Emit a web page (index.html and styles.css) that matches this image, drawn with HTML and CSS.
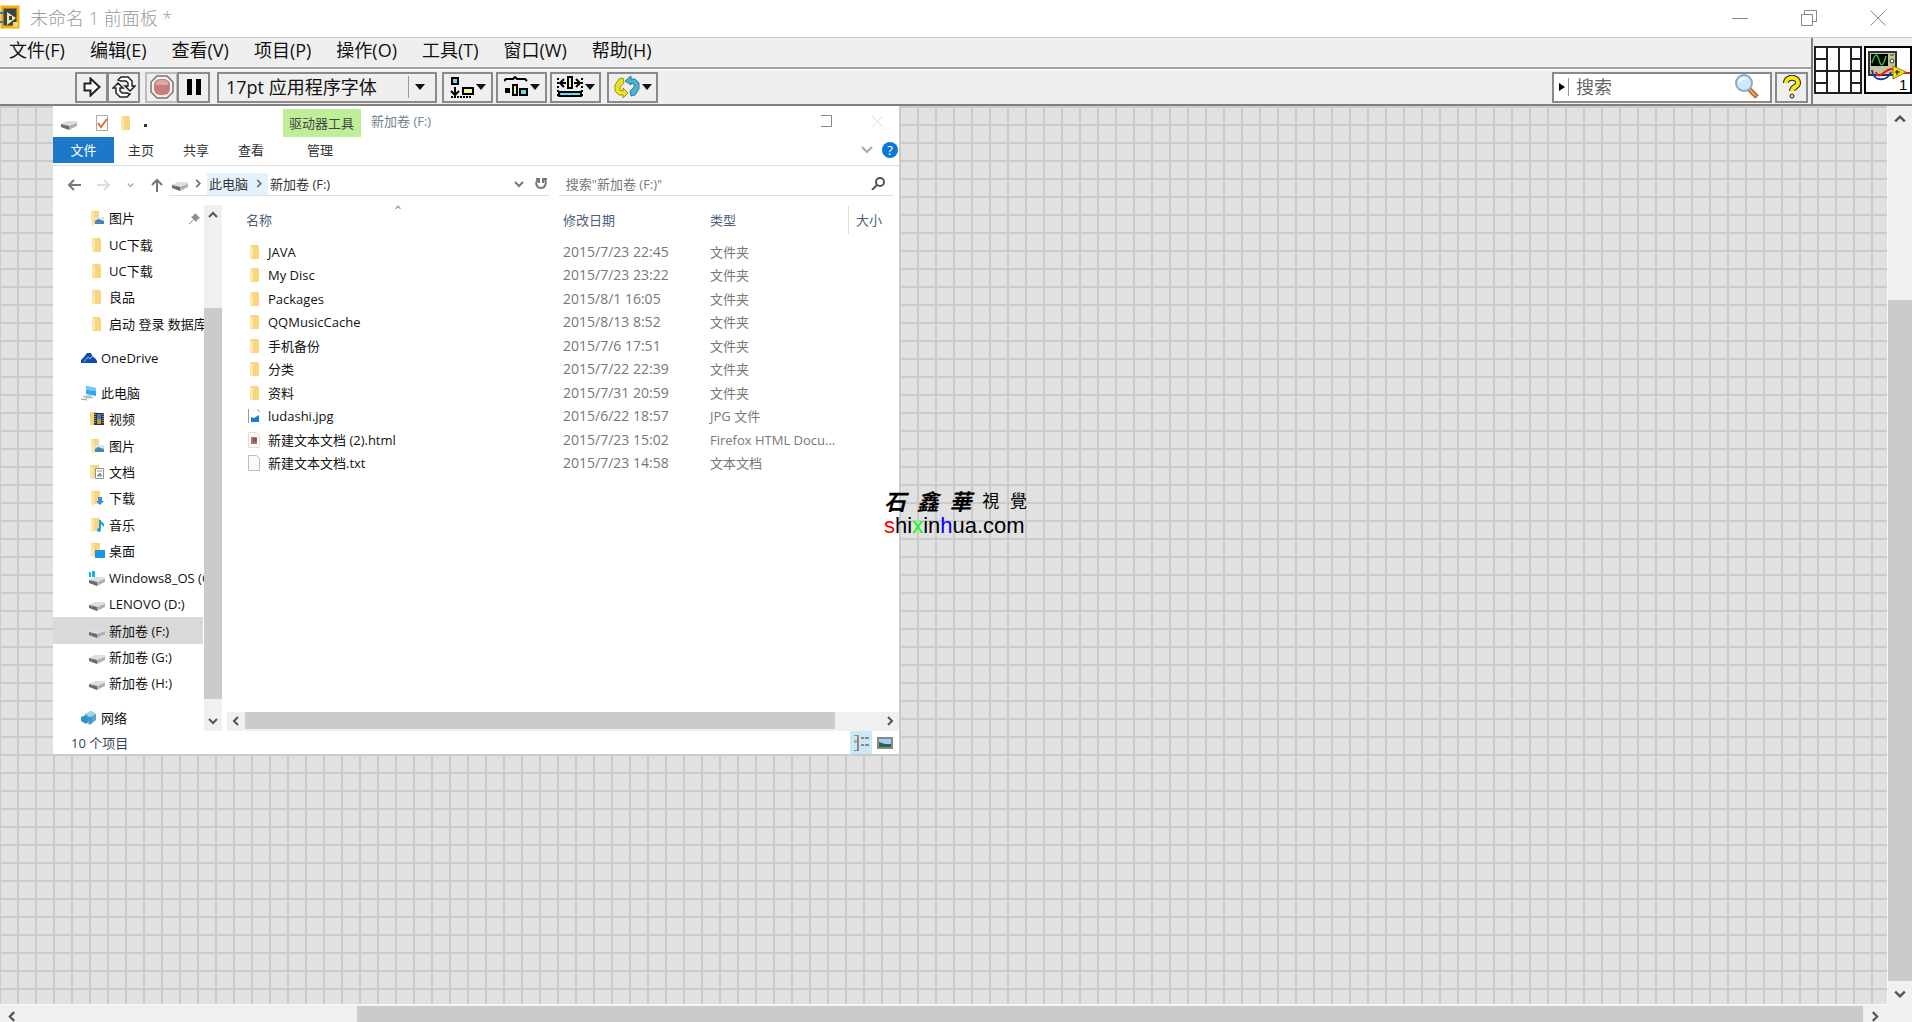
FILE: index.html
```html
<!DOCTYPE html>
<html lang="zh-CN">
<head>
<meta charset="utf-8">
<title>未命名 1 前面板</title>
<link rel="stylesheet" href="styles.css">
</head>
<body>
<svg class="defs" aria-hidden="true">
  <symbol id="folder" viewBox="0 0 16 16"><path d="M3 1h8l1 2v12H3z" fill="#f7d67e"/><path d="M3 1l3 2v13l-3-2z" fill="#fbe6ab"/></symbol>
  <symbol id="pictures" viewBox="0 0 16 16"><path d="M2 1h8v13H2z" fill="#f7d67e"/><path d="M2 1l3 2v13l-3-2z" fill="#fbe6ab"/><path d="M6 7h9v7H6z" fill="#cfe6f7"/><path d="M6 11l3-2 6 2v3H6z" fill="#4c86ae"/></symbol>
  <symbol id="video" viewBox="0 0 16 16"><path d="M1 1h8v13H1z" fill="#f7d67e"/><path d="M5 2h10v12H5z" fill="#333"/><path d="M8 3h4v5H8z" fill="#3d7bd0"/><path d="M8 8h4v5H8z" fill="#b99a3c"/><path d="M6 3v10M14 3v10" stroke="#ddd" stroke-dasharray="1 1"/></symbol>
  <symbol id="docs" viewBox="0 0 16 16"><path d="M1 1h9v13H1z" fill="#f7d67e"/><path d="M1 1l3 2v13l-3-2z" fill="#fbe6ab"/><path d="M6.500 4.500h8v10h-8z" fill="#fff" stroke="#8b969c"/><path d="M8 12l3-3 2 3zM8 7h5" fill="#8b969c" stroke="#8b969c"/></symbol>
  <symbol id="downloads" viewBox="0 0 16 16"><path d="M2 1h9v13H2z" fill="#f7d67e"/><path d="M2 1l3 2v13l-3-2z" fill="#fbe6ab"/><path d="M9 7h4v4h2l-4 4-4-4h2z" fill="#3c8ed8"/></symbol>
  <symbol id="music" viewBox="0 0 16 16"><path d="M2 1h9v13H2z" fill="#f7d67e"/><path d="M2 1l3 2v13l-3-2z" fill="#fbe6ab"/><path d="M11 3v9" stroke="#159be8" stroke-width="2"/><circle cx="10" cy="13" r="2" fill="#159be8"/><path d="M11 3l4 4v3l-4-4z" fill="#159be8"/></symbol>
  <symbol id="desktop" viewBox="0 0 16 16"><path d="M2 0h9v13H2z" fill="#f7d67e"/><path d="M2 0l3 2v13l-3-2z" fill="#fbe6ab"/><path d="M6 7h10v8H6z" fill="#1797e5"/></symbol>
  <symbol id="drive" viewBox="0 0 16 16"><path d="M0 9l6-3h10v3l-8 3z" fill="#dedede"/><path d="M0 9l8 2v4l-8-3z" fill="#6a6a6a"/><path d="M8 11l8-3v3l-8 4z" fill="#b0b0b0"/><path d="M2 11h2" stroke="#41bd4e"/></symbol>
  <symbol id="osdrive" viewBox="0 0 16 16"><path d="M0 10l6-3h10v3l-8 3z" fill="#dedede"/><path d="M0 10l8 2v4l-8-3z" fill="#6a6a6a"/><path d="M8 12l8-3v3l-8 4z" fill="#b0b0b0"/><path d="M0 2h2v5H0zM3 1h3v6H3z" fill="#12b2ee"/></symbol>
  <symbol id="cloud" viewBox="0 0 16 12"><path d="M0 11V8l3-3 3-4 4 0 2 4 2 1 2 3v2z" fill="#0c4eaa"/><path d="M3 10l4-5 2 2 2-3" stroke="#9dbbe6" fill="none"/></symbol>
  <symbol id="pc" viewBox="0 0 16 16"><path d="M5 1l10 2v8L5 9z" fill="#32a9ec"/><path d="M5 1l10 2v3L5 5z" fill="#71caf8"/><path d="M1 11l8-1 4 3-8 1z" fill="#b9c2c9"/><path d="M0 14l6 1" stroke="#8c989f"/></symbol>
  <symbol id="network" viewBox="0 0 16 16"><path d="M4 4l6-3 5 3v6l-6 5-5-4z" fill="#5aa5d2"/><path d="M4 4l6-3 5 3-6 3z" fill="#a5d5ee"/><path d="M0 7l5-2 4 4-4 5-5-3z" fill="#3193ca"/><path d="M10 7v6" stroke="#347aaa"/></symbol>
  <symbol id="chev-r" viewBox="0 0 8 10"><path d="M2 1l4 4-4 4" fill="none" stroke="currentColor" stroke-width="2"/></symbol>
  <symbol id="chev-l" viewBox="0 0 8 10"><path d="M6 1L2 5l4 4" fill="none" stroke="currentColor" stroke-width="2"/></symbol>
  <symbol id="chev-d" viewBox="0 0 10 8"><path d="M1 2l4 4 4-4" fill="none" stroke="currentColor" stroke-width="2"/></symbol>
  <symbol id="chev-u" viewBox="0 0 10 8"><path d="M1 6l4-4 4 4" fill="none" stroke="currentColor" stroke-width="2"/></symbol>
  <symbol id="tri" viewBox="0 0 10 6"><path d="M0 0h10L5 6z" fill="#111"/></symbol>
</svg>

<header class="titlebar">
  <svg class="logo" viewBox="0 0 24 28"><path d="M2 3h16v20H2z" fill="#3b4248" stroke="#f0b010" stroke-width="3"/><path d="M7 8l9 6-9 7z" fill="#f3e7a0"/><path d="M9 12h3v4H9z" fill="#3b4248"/><path d="M0 9h4M0 18h4" stroke="#2680b5" stroke-width="2"/><path d="M13 18h5v5h-5z" fill="#f6d66a"/></svg>
  <h1>未命名 1 前面板 *</h1>
  <button aria-label="最小化"><svg width="16" height="16"><path d="M0 8.500h16" stroke="#888"/></svg></button>
  <button aria-label="还原"><svg width="16" height="16" fill="none" stroke="#888"><path d="M.5 4.500h11v11H.5zM3.500 4V.5h12v11H12"/></svg></button>
  <button aria-label="关闭"><svg width="16" height="16" stroke="#888"><path d="M.5.5l15 15M15.500.5l-15 15"/></svg></button>
</header>

<div class="chrome">
  <div class="bars">
    <nav class="menu">
      <button>文件(F)</button><button>编辑(E)</button><button>查看(V)</button><button>项目(P)</button><button>操作(O)</button><button>工具(T)</button><button>窗口(W)</button><button>帮助(H)</button>
    </nav>
    <div class="toolbar">
      <div class="group">
        <button class="tool" aria-label="运行"><svg width="18" height="20"><path d="M1.500 6.500h6V1.500l9 8.500-9 8.500v-5h-6z" fill="#fff" stroke="#222" stroke-width="2"/></svg></button>
        <button class="tool" aria-label="连续运行"><svg width="24" height="22" fill="#fff" stroke="#222" stroke-width="1.500"><path d="M6 4l3-3h7l4 4v5h3l-5 5-5-5h3V7l-2-2h-5z"/><path d="M18 18l-3 3H8l-4-4v-5H1l5-5 5 5H8v3l2 2h5z"/></svg></button>
      </div>
      <div class="group">
        <button class="tool off" aria-label="中止"><svg width="24" height="24"><path d="M7 1h10l6 6v10l-6 6H7l-6-6V7z" fill="#f4eeee" stroke="#777" stroke-width="1.500"/><rect x="4" y="4" width="16" height="16" rx="6" fill="#c77c7e"/><path d="M6 7c3-3 9-3 12 0v3H6z" fill="#dda6a6"/></svg></button>
        <button class="tool" aria-label="暂停"><svg width="14" height="16"><path d="M0 0h5v16H0zM9 0h5v16H9z" fill="#000"/></svg></button>
      </div>
      <button class="font-box"><span>17pt 应用程序字体</span><i></i><svg class="tri"><use href="#tri"/></svg></button>
      <div class="group spaced">
        <button class="tool wide" aria-label="对齐对象"><svg width="24" height="22"><path d="M2 2h6v6H2z" fill="#6fd8f2" stroke="#000" stroke-width="2"/><path d="M13 12h10v6H13z" fill="#f7f29a" stroke="#000" stroke-width="2"/><path d="M5 11v8M1 15l4 4 4-4" stroke="#000" stroke-width="2" fill="none"/><path d="M1 21h20" stroke="#000" stroke-width="2" stroke-dasharray="2 1"/></svg><svg class="tri"><use href="#tri"/></svg></button>
        <button class="tool wide" aria-label="分布对象"><svg width="24" height="22"><path d="M0 5l2-2h7l2-2 2 2h8l2 2" fill="none" stroke="#000" stroke-width="2"/><path d="M1 12h5v5H1z"/><path d="M9 9h4v10H9z" fill="#f7f29a" stroke="#000" stroke-width="2"/><path d="M16 13h7v6h-7z" fill="#6fd8f2" stroke="#000" stroke-width="2"/></svg><svg class="tri"><use href="#tri"/></svg></button>
        <button class="tool wide" aria-label="调整对象大小"><svg width="26" height="22"><path d="M1 2v18M25 2v18" stroke="#000" stroke-dasharray="2 2" stroke-width="2"/><path d="M3 7h6M17 7h6M7 3L3 7l4 4M19 3l4 4-4 4" stroke="#000" stroke-width="2" fill="none"/><path d="M11 1h4v11h-4z" fill="#f7f29a" stroke="#000" stroke-width="2"/><path d="M2 16h22v4H2z" fill="#6fd8f2" stroke="#000" stroke-width="2"/></svg><svg class="tri"><use href="#tri"/></svg></button>
        <button class="tool wide order" aria-label="重新排序"><svg width="26" height="24"><path d="M9 3L5 4 1 10v6l4 4h4v3l5-5-5-5v3l-3-1v-3l4-4z" fill="#eee01b" stroke="#9a9413"/><path d="M17 21l4-1 4-6V8l-4-4h-4V1l-6 5 6 4V8l3 1v3l-4 4z" fill="#4bb3ce" stroke="#2b7f98"/></svg><svg class="tri"><use href="#tri"/></svg></button>
      </div>
      <div class="search">
        <svg width="6" height="8"><path d="M0 0l6 4-6 4z"/></svg><i></i>
        <input type="text" placeholder="搜索" aria-label="搜索">
        <svg width="26" height="26"><path d="M15 15l8 8" stroke="#b36a33" stroke-width="5"/><path d="M14 14l8 8" stroke="#eaa565" stroke-width="2"/><circle cx="10" cy="9" r="8" fill="#cdeafc" stroke="#8aa9c9" stroke-width="2"/><path d="M5 8c1-3 4-4 7-3" stroke="#fff" stroke-width="2" fill="none"/></svg>
      </div>
      <button class="tool" aria-label="帮助"><svg width="18" height="24"><path d="M3 8c0-7 12-7 12 0 0 4-6 4-6 8" fill="none" stroke="#222" stroke-width="6"/><path d="M3 8c0-7 12-7 12 0 0 4-6 4-6 8" fill="none" stroke="#f5ec12" stroke-width="4"/><circle cx="9" cy="21" r="2" fill="#f5ec12" stroke="#222"/></svg></button>
    </div>
  </div>
  <div class="vi">
    <svg width="48" height="48" fill="#fff" stroke="#222" stroke-width="2"><path d="M1 1h46v46H1z"/><path d="M13 1v46M25 1v46M37 1v46M1 13h12M1 25h46M1 37h12M37 13h10M37 37h10"/></svg>
    <svg width="48" height="48"><path d="M1 1h46v46H1z" fill="#fff" stroke="#000" stroke-width="2"/><path d="M5 6h27v23H5z" fill="#c9c4a0" stroke="#333" stroke-width="2"/><path d="M7 8h17v12H7z"/><path d="M8 17c3-10 5-10 7-3s4 7 7-4" fill="none" stroke="#28c440" stroke-width="1.500"/><circle cx="28" cy="15" r="2" fill="#fff" stroke="#333"/><path d="M26 9h4" stroke="#333"/><path d="M8 24c1 12 15 12 19 2" stroke="#223a9c" stroke-width="2" fill="none"/><path d="M12 26c3 10 8-4 17-3M40 27h6" stroke="#e81c1c" stroke-width="2" fill="none"/><path d="M29 20l13 6-13 7z" fill="#f3e51b" stroke="#8b7c00"/><path d="M31 26h5M33 24v5" stroke="#000"/><text x="35" y="44" class="vi-num">1</text></svg>
  </div>
</div>

<main class="workspace">
  <section class="panel">
    <article class="explorer">
      <div class="ex-title">
        <svg class="ic"><use href="#drive"/></svg>
        <svg width="12" height="18" class="check"><path d="M.5 1.500h11v15H.5z" fill="#fff" stroke="#aaa"/><path d="M2 9l3 4 6-8" stroke="#e8693c" stroke-width="2" fill="none"/></svg>
        <svg class="ic"><use href="#folder"/></svg>
        <b></b>
        <span class="tools">驱动器工具</span>
        <h2>新加卷 (F:)</h2>
        <button aria-label="最大化"><svg width="11" height="13"><path d="M0 .5h10.500v11H0" fill="none" stroke="#888"/></svg></button>
        <button aria-label="关闭窗口"><svg width="11" height="11"><path d="M0 0l11 11M11 0L0 11" stroke="#ddd"/></svg></button>
      </div>
      <div class="tabs">
        <button class="file">文件</button><button>主页</button><button>共享</button><button>查看</button><button class="manage">管理</button>
        <svg width="12" height="8" class="fold"><path d="M1 1l5 5 5-5" stroke="#aaa" fill="none" stroke-width="2"/></svg>
        <button class="help">?</button>
      </div>
      <div class="address">
        <div class="arrows">
          <svg width="14" height="12" fill="none" stroke="#777" stroke-width="2"><path d="M14 6H2M7 1L2 6l5 5"/></svg>
          <svg width="14" height="12" fill="none" stroke="#ddd" stroke-width="2"><path d="M0 6h12M7 1l5 5-5 5"/></svg>
          <svg class="small"><use href="#chev-d"/></svg>
          <svg width="14" height="14" fill="none" stroke="#777" stroke-width="2"><path d="M7 14V2M2 7l5-5 5 5"/></svg>
        </div>
        <div class="path">
          <svg class="ic"><use href="#drive"/></svg>
          <svg class="chev"><use href="#chev-r"/></svg>
          <a href="#pc" class="crumb">此电脑<svg class="chev"><use href="#chev-r"/></svg></a>
          <a href="#f">新加卷 (F:)</a>
          <svg class="drop"><use href="#chev-d"/></svg>
          <svg width="12" height="13"><path d="M1 2h3v4M3 3C0 5 1 11 6 11s6-7 3-9M8 6V2h4" stroke="#777" stroke-width="2" fill="none"/></svg>
        </div>
        <div class="find">
          <input type="text" placeholder="搜索&quot;新加卷 (F:)&quot;" aria-label="搜索新加卷">
          <svg width="14" height="13"><circle cx="9" cy="5" r="4" fill="none" stroke="#555" stroke-width="2"/><path d="M6 8l-5 5" stroke="#555" stroke-width="2"/></svg>
        </div>
      </div>
      <div class="ex-body">
        <nav class="tree">
          <a href="#t" class="sub"><svg class="ic"><use href="#pictures"/></svg><span>图片</span><svg width="12" height="12" class="pin"><path d="M6 1l5 5-2 1-2 3-5-5 3-2z" fill="#888f96"/><path d="M4 8l-4 4" stroke="#888f96"/></svg></a>
          <a href="#t" class="sub"><svg class="ic"><use href="#folder"/></svg><span>UC下载</span></a>
          <a href="#t" class="sub"><svg class="ic"><use href="#folder"/></svg><span>UC下载</span></a>
          <a href="#t" class="sub"><svg class="ic"><use href="#folder"/></svg><span>良品</span></a>
          <a href="#t" class="sub"><svg class="ic"><use href="#folder"/></svg><span>启动 登录 数据库</span></a>
          <a href="#t" class="root"><svg class="ic"><use href="#cloud"/></svg><span>OneDrive</span></a>
          <a href="#t" class="root"><svg class="ic"><use href="#pc"/></svg><span>此电脑</span></a>
          <a href="#t" class="sub"><svg class="ic"><use href="#video"/></svg><span>视频</span></a>
          <a href="#t" class="sub"><svg class="ic"><use href="#pictures"/></svg><span>图片</span></a>
          <a href="#t" class="sub"><svg class="ic"><use href="#docs"/></svg><span>文档</span></a>
          <a href="#t" class="sub"><svg class="ic"><use href="#downloads"/></svg><span>下载</span></a>
          <a href="#t" class="sub"><svg class="ic"><use href="#music"/></svg><span>音乐</span></a>
          <a href="#t" class="sub"><svg class="ic"><use href="#desktop"/></svg><span>桌面</span></a>
          <a href="#t" class="sub"><svg class="ic"><use href="#osdrive"/></svg><span>Windows8_OS (C:)</span></a>
          <a href="#t" class="sub"><svg class="ic"><use href="#drive"/></svg><span>LENOVO (D:)</span></a>
          <a href="#t" class="sub current"><svg class="ic"><use href="#drive"/></svg><span>新加卷 (F:)</span></a>
          <a href="#t" class="sub"><svg class="ic"><use href="#drive"/></svg><span>新加卷 (G:)</span></a>
          <a href="#t" class="sub"><svg class="ic"><use href="#drive"/></svg><span>新加卷 (H:)</span></a>
          <a href="#t" class="root"><svg class="ic"><use href="#network"/></svg><span>网络</span></a>
        </nav>
        <div class="vbar slim"><svg><use href="#chev-u"/></svg><span class="before"></span><span class="thumb"></span><svg><use href="#chev-d"/></svg></div>
        <div class="files">
          <svg class="sort"><use href="#chev-u"/></svg>
          <table>
            <colgroup><col class="c-name"><col class="c-date"><col class="c-type"><col></colgroup>
            <thead><tr><th>名称</th><th>修改日期</th><th>类型</th><th><span>大小</span></th></tr></thead>
            <tbody>
              <tr><td><svg class="ic"><use href="#folder"/></svg>JAVA</td><td>2015/7/23 22:45</td><td>文件夹</td><td></td></tr>
              <tr><td><svg class="ic"><use href="#folder"/></svg>My Disc</td><td>2015/7/23 23:22</td><td>文件夹</td><td></td></tr>
              <tr><td><svg class="ic"><use href="#folder"/></svg>Packages</td><td>2015/8/1 16:05</td><td>文件夹</td><td></td></tr>
              <tr><td><svg class="ic"><use href="#folder"/></svg>QQMusicCache</td><td>2015/8/13 8:52</td><td>文件夹</td><td></td></tr>
              <tr><td><svg class="ic"><use href="#folder"/></svg>手机备份</td><td>2015/7/6 17:51</td><td>文件夹</td><td></td></tr>
              <tr><td><svg class="ic"><use href="#folder"/></svg>分类</td><td>2015/7/22 22:39</td><td>文件夹</td><td></td></tr>
              <tr><td><svg class="ic"><use href="#folder"/></svg>资料</td><td>2015/7/31 20:59</td><td>文件夹</td><td></td></tr>
              <tr><td><svg class="ic" viewBox="0 0 16 16"><path d="M1.500 1v14M10 1l3 3" stroke="#999"/><path d="M4 14V9l3 1 5-3v7z" fill="#1680d8"/></svg>ludashi.jpg</td><td>2015/6/22 18:57</td><td>JPG 文件</td><td></td></tr>
              <tr><td><svg class="ic" viewBox="0 0 16 16"><path d="M1.500.5h8l3 3v12h-11z" fill="#fafafa" stroke="#ddd"/><path d="M4 5h6v7H4z" fill="#e0642a"/><circle cx="8" cy="8" r="2" fill="#2b6cc4"/></svg>新建文本文档 (2).html</td><td>2015/7/23 15:02</td><td>Firefox HTML Docu...</td><td></td></tr>
              <tr><td><svg class="ic" viewBox="0 0 16 16"><path d="M1.500.5h8l3 3v12h-11z" fill="#fafafa" stroke="#bbb"/></svg>新建文本文档.txt</td><td>2015/7/23 14:58</td><td>文本文档</td><td></td></tr>
            </tbody>
          </table>
          <div class="hbar slim"><svg><use href="#chev-l"/></svg><span class="thumb"></span><span class="after"></span><svg><use href="#chev-r"/></svg></div>
        </div>
      </div>
      <div class="status">
        <span>10 个项目</span>
        <button class="on" aria-label="详细信息"><svg width="16" height="16"><path d="M1 0h4v16H1M8 3h3M12 3h4M8 10h3M12 10h4" fill="none" stroke="#8a8a8a" stroke-width="2"/><path d="M1 5h3v3H1z" fill="#d6a45c"/></svg></button>
        <button aria-label="大图标"><svg width="16" height="12"><path d="M1 1h14v10H1z" fill="#9cd0f4" stroke="#888" stroke-width="2"/><path d="M2 5l6 2h6v3H2z" fill="#2e6350"/></svg></button>
      </div>
    </article>
    <div class="mark">
      <div class="brush"><b>石</b><b>鑫</b><b>華</b><span>視</span><span>覺</span></div>
      <div class="site"><span class="r">s</span>hi<span class="g">x</span>in<span class="b">h</span>ua.com</div>
    </div>
  </section>
  <div class="vbar main-v"><svg><use href="#chev-u"/></svg><span class="before"></span><span class="thumb"></span><svg><use href="#chev-d"/></svg></div>
  <div class="hbar main-h"><svg><use href="#chev-l"/></svg><span class="before"></span><span class="thumb"></span><svg><use href="#chev-r"/></svg></div>
</main>
</body>
</html>
```
FILE: styles.css
```css
* { box-sizing: border-box; }
body {
  margin: 0;
  height: 100vh;
  display: flex;
  flex-direction: column;
  overflow: hidden;
  background: #efefef;
  color: #111;
  font: 18px/24px "Open Sans", "Noto Sans CJK SC", sans-serif;
}
button { margin: 0; padding: 0; border: 0; background: none; color: inherit; font: inherit; }
a { color: inherit; text-decoration: none; }
h1, h2 { margin: 0; font: inherit; }
input { border: 0; padding: 0; background: none; font: inherit; min-width: 0; outline: 0; }
svg { display: block; flex: none; }
.defs { position: absolute; width: 0; height: 0; }

/* title bar */
.titlebar { display: flex; align-items: center; height: 38px; flex: none; padding-bottom: 2px; background: #fff; border-bottom: 1px solid #ccc; }
.logo { width: 24px; height: 28px; margin-right: 6px; }
.titlebar h1 { flex: 1; color: #999; font-weight: 300; }
.titlebar button { width: 69px; height: 35px; display: grid; place-items: center; }

/* menu and toolbar */
.chrome { display: flex; flex: none; height: 68px; border-bottom: 2px solid #808080; }
.bars { flex: 1; min-width: 0; }
.menu { display: flex; gap: 25px; height: 31px; padding-left: 9px; border-bottom: 2px solid #a0a0a0; }
.menu button { height: 24px; white-space: nowrap; }
.toolbar { display: flex; align-items: center; height: 35px; padding: 0 3px 0 75px; border-top: 1px solid #fff; }
.group { display: flex; margin-right: 5px; }
.tool { display: flex; align-items: center; justify-content: center; width: 33px; height: 31px; border: 2px solid #8a8a8a; background: #efefef; }
.group .tool + .tool { margin-left: -1px; }
.tool.off { border-color: #bcbcbc; }
.tri { width: 10px; height: 6px; }
.font-box { display: flex; align-items: center; width: 220px; height: 31px; margin: 0 5px 0 2px; padding: 0 10px 0 7px; border: 2px solid #8a8a8a; white-space: nowrap; }
.font-box span { flex: 1; text-align: left; }
.font-box i { width: 1px; height: 22px; margin-right: 6px; background: #999; }
.spaced { gap: 3px; }
.group .wide, .group .wide + .wide { width: 51px; gap: 2px; margin-left: 0; }
.group .wide + .order { margin-left: 3px; }
.search { display: flex; align-items: center; width: 220px; height: 31px; margin: 0 3px 0 auto; padding: 0 10px 0 5px; border: 2px solid #8a8a8a; background: #fff; }
.search i { width: 1px; height: 18px; margin: 0 7px 0 3px; background: #999; }
.search input { flex: 1; }
.search input::placeholder { color: #666; opacity: 1; }
.vi { display: flex; gap: 2px; padding: 8px 0 0 1px; border-left: 2px solid #808080; }
.vi-num { font: 15px "Liberation Sans", sans-serif; }

/* workspace */
.workspace { flex: 1; min-height: 0; display: grid; grid-template: minmax(0, 1fr) 17px / minmax(0, 1fr) 24px; }
.panel {
  position: relative;
  overflow: hidden;
  border: solid #f8f8f8;
  border-width: 0 1px 1px 0;
  background-color: #e1e1e1;
  background-image: linear-gradient(#cbcbcb 2px, transparent 2px), linear-gradient(90deg, #cbcbcb 2px, transparent 2px);
  background-size: 18px 18px;
  background-position: 0 0, 17px 0;
}
.vbar, .hbar { display: flex; align-items: center; background: #f0f0f0; color: #555; overflow: hidden; }
.vbar { flex-direction: column; }
.thumb { background: #cbcbcb; }
.vbar .thumb { width: 100%; }
.hbar .thumb { height: 100%; }
.vbar svg { width: 12px; height: 10px; margin: 8px 0 6px; }
.hbar svg { width: 10px; height: 12px; margin: 0 7px; }
.main-v .before { flex: 170; }
.main-v .thumb { flex: 679; }
.main-h { grid-column: 1 / -1; padding-right: 25px; align-items: flex-end; }
.main-h .before { flex: 333; }
.main-h .thumb { flex: 1505; height: 16px; }
.main-h svg { height: 11px; }

/* file explorer window */
.explorer {
  position: absolute;
  left: 53px;
  top: 0;
  width: 846px;
  height: 648px;
  display: flex;
  flex-direction: column;
  background: #fff;
  font-size: 13px;
  line-height: 20px;
}
.ic { width: 16px; height: 16px; }
.ex-title { display: flex; align-items: center; height: 31px; flex: none; padding: 3px 0 0 8px; }
.check { margin: 0 10px 0 19px; }
.ex-title b { width: 3px; height: 3px; margin: 4px 136px 0 10px; background: #333; }
.tools { align-self: stretch; padding: 4px 6px; width: 78px; background: #bfee98; color: #444; white-space: nowrap; }
.ex-title h2 { flex: 1; margin: 0 0 4px 10px; color: #75808f; }
.ex-title button { width: 51px; height: 24px; margin-bottom: 4px; display: grid; place-items: center; }
.ex-title button:last-child { margin-right: -4px; }
.tabs { display: flex; align-items: center; height: 29px; flex: none; padding-bottom: 2px; border-bottom: 1px solid #ddd; }
.tabs button { width: 26px; height: 26px; margin-right: 29px; color: #333; white-space: nowrap; }
.tabs .file { width: 61px; margin-right: 14px; background: #1c79ca; color: #fff; }
.tabs .manage { margin-left: 14px; }
.fold { margin-left: auto; margin-right: 9px; }
.tabs .help { width: 16px; height: 16px; margin-right: 1px; border-radius: 8px; background: #0b78d7; color: #fff; line-height: 16px; }
.address { display: flex; height: 31px; flex: none; padding-top: 6px; }
.arrows { display: flex; align-items: center; gap: 16px; width: 116px; padding-left: 14px; color: #aaa; }
.small { width: 7px; height: 6px; }
.path, .find { display: flex; align-items: center; height: 24px; border-bottom: 1px solid #ddd; white-space: nowrap; }
.path { flex: 385; margin-right: 10px; padding: 0 2px 0 3px; color: #333; }
.chev { width: 8px; height: 9px; color: #777; }
.path > .chev { margin: 0 5px 0 6px; }
.crumb { display: flex; align-items: center; gap: 7px; height: 22px; margin-right: 2px; padding: 0 5px 0 2px; background: #e5f2fd; }
.drop { width: 10px; height: 8px; margin: 0 11px 0 auto; color: #777; }
.find { flex: 328; margin-right: 6px; padding: 0 8px 0 7px; }
.find input { flex: 1; }
.find input::placeholder { color: #777; opacity: 1; }
.ex-body { flex: 1; min-height: 0; display: flex; padding-top: 8px; }
.tree { display: flex; flex-direction: column; width: 151px; }
.tree a { flex: 1; display: flex; align-items: center; gap: 4px; overflow: hidden; padding-left: 36px; white-space: nowrap; }
.tree .root { margin-top: 8px; padding-left: 28px; }
.tree .current { width: 150px; background: #d9d9d9; }
.tree a span { flex: 1; }
.pin { margin-right: 3px; }
.slim.vbar { width: 18px; }
.slim.vbar svg, .slim.hbar svg { width: 10px; height: 10px; margin: 5px 4px; }
.slim.vbar .before { flex: 83; }
.slim.vbar .thumb { flex: 392; }
.slim.vbar svg:last-child { margin-top: 17px; }
.files { flex: 1; min-width: 0; display: flex; flex-direction: column; margin-left: 5px; }
.sort { width: 8px; height: 5px; margin-left: 167px; color: #999; }
table { width: 100%; table-layout: fixed; border-collapse: collapse; margin-top: -7px; }
.c-name { width: 336px; }
.c-date { width: 147px; }
.c-type { width: 138px; }
th, td { padding: 0; text-align: left; white-space: nowrap; }
th { height: 37px; padding-bottom: 3px; color: #4c607a; font-weight: 400; }
th:first-child { padding-left: 19px; }
th span { display: block; padding: 4px 0 4px 7px; border-left: 1px solid #ddd; }
tbody { color: #777; }
td { height: 23px; }
tr:nth-child(even) td { height: 24px; }
td:first-child { padding-left: 20px; color: #111; }
td:nth-child(2) { font-size: 14px; }
td .ic { display: inline-block; vertical-align: -3px; margin-right: 5px; }
.slim.hbar { height: 19px; margin-top: auto; padding-bottom: 2px; }
.slim.hbar .thumb { flex: 589; }
.slim.hbar .after { flex: 46; }
.status { display: flex; align-items: center; height: 23px; flex: none; padding-left: 18px; color: #33445a; }
.status span { flex: 1; }
.status button { display: grid; place-items: center; width: 22px; height: 23px; }
.status .on { background: #cbe8f6; }
.status button:last-child { margin: 0 3px 0 2px; }

/* floating site mark */
.mark { position: absolute; left: 884px; top: 380px; width: 143px; color: #000; }
.brush { display: flex; justify-content: space-between; align-items: center; height: 28px; font-family: "Noto Sans CJK TC", sans-serif; }
.brush b { font-size: 22px; font-style: italic; }
.brush span { font-size: 17px; }
.site { font: 22px/24px "Liberation Sans", Arial, sans-serif; }
.r { color: #f00; }
.g { color: #0f0; }
.b { color: #00f; }
```
